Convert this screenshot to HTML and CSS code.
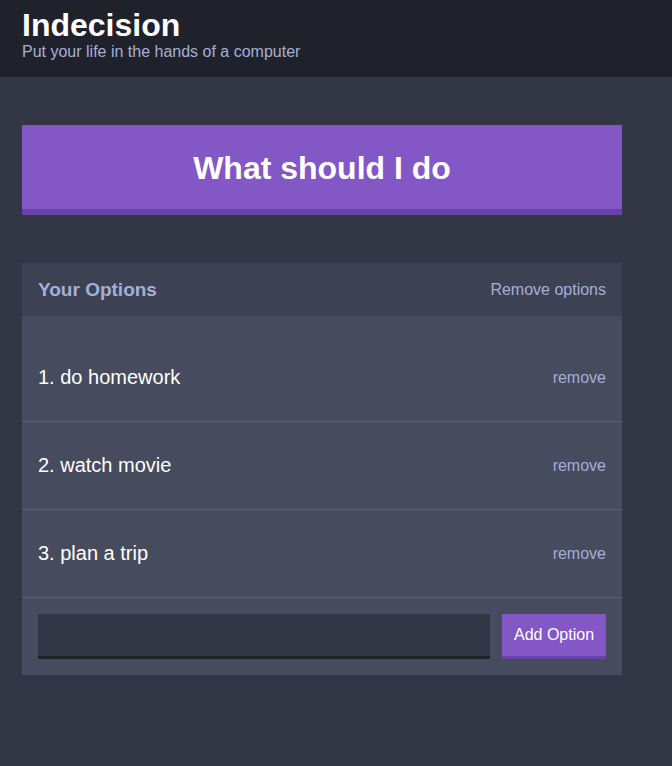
FILE: index.html
```html
<!DOCTYPE html>
<html>
<head>
<meta charset="utf-8">
<link rel="stylesheet" href="styles.css">
</head>
<body>
<header class="header">
  <div class="container">
    <h1 class="header__title">Indecision</h1>
    <h2 class="header__subtitle">Put your life in the hands of a computer</h2>
  </div>
</header>
<main class="container">
  <button class="big-button">What should I do</button>
  <section class="widget">
    <div class="widget-header">
      <h3 class="widget-header__title">Your Options</h3>
      <button class="button--link">Remove options</button>
    </div>
    <div class="options">
      <div class="option">
        <p class="option__text">1. do homework</p>
        <button class="button--link">remove</button>
      </div>
      <div class="option">
        <p class="option__text">2. watch movie</p>
        <button class="button--link">remove</button>
      </div>
      <div class="option">
        <p class="option__text">3. plan a trip</p>
        <button class="button--link">remove</button>
      </div>
    </div>
    <form class="add-option">
      <input class="add-option__input" type="text" name="option">
      <button class="button" type="button">Add Option</button>
    </form>
  </section>
</main>
</body>
</html>
```
FILE: styles.css
```css
* { box-sizing: border-box; }
html, body { margin: 0; padding: 0; }
body {
  background: #333745;
  font-family: "Liberation Sans", Arial, sans-serif;
  color: #fff;
  min-height: 766px;
}
.container {
  width: 600px;
  margin-left: 22px;
}
.header {
  background: #20222b;
  height: 77px;
  padding-top: 8px;
}
.header__title {
  margin: 0;
  font-size: 32px;
  line-height: 34px;
  font-weight: bold;
  color: #fff;
}
.header__subtitle {
  margin: 0;
  font-size: 16px;
  line-height: 20px;
  font-weight: normal;
  color: #a5afd7;
}
.big-button {
  display: block;
  width: 600px;
  height: 90px;
  margin: 48px 0 48px;
  background: #8357c5;
  border: none;
  border-bottom: 6px solid #6a41ad;
  color: #fff;
  font-family: inherit;
  font-weight: bold;
  font-size: 32px;
  padding: 0;
  padding-top: 2px;
}
.widget {
  background: #464b5e;
}
.widget-header {
  background: #3c4251;
  height: 53px;
  display: flex;
  justify-content: space-between;
  align-items: center;
  padding: 0 16px;
}
.widget-header__title {
  margin: 0;
  font-size: 19px;
  font-weight: bold;
  color: #a5afd7;
}
.button--link {
  background: none;
  border: none;
  padding: 0;
  font-family: inherit;
  font-size: 16px;
  color: #a5afd7;
}
.options {
  padding-top: 18px;
}
.option {
  height: 88px;
  display: flex;
  justify-content: space-between;
  align-items: center;
  padding: 0 16px;
  border-bottom: 1px solid #596081;
}
.option__text {
  margin: 0;
  font-size: 20px;
  color: #fff;
}
.add-option {
  display: flex;
  padding: 16px;
  gap: 12px;
  margin: 0;
}
.add-option__input {
  flex: 1;
  height: 45px;
  background: #333745;
  border: none;
  border-bottom: 3px solid #20222b;
  color: #a5afd7;
  font-size: 16px;
  padding: 0 12px;
}
.button {
  height: 45px;
  width: 104px;
  background: #8357c5;
  border: none;
  border-bottom: 3px solid #6a41ad;
  color: #fff;
  font-family: inherit;
  font-size: 16px;
  padding: 0;
}
```
